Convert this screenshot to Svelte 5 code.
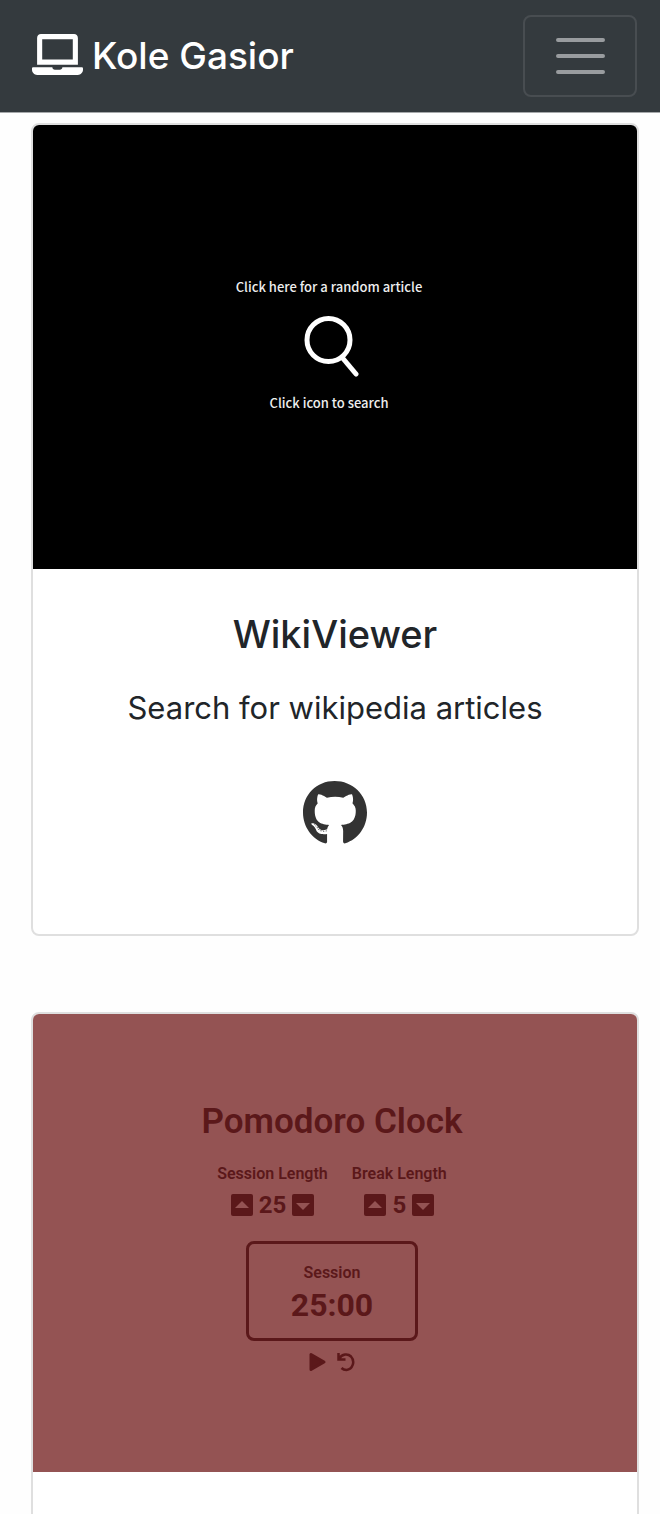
<script>
  const lengths = [
    { label: 'Session Length', value: 25 },
    { label: 'Break Length', value: 5 }
  ];
</script>

<div class="page">
  <nav class="navbar">
    <a class="brand" href="#home">
      <svg class="laptop" viewBox="0 0 640 512" aria-hidden="true"><path d="M624 416H381.54c-.74 19.81-14.71 32-32.74 32H288c-18.69 0-33.02-17.47-32.77-32H16c-8.8 0-16 7.2-16 16v16c0 35.2 28.8 64 64 64h512c35.2 0 64-28.8 64-64v-16c0-8.8-7.2-16-16-16zM576 48c0-26.4-21.6-48-48-48H112C85.6 0 64 21.6 64 48v336h512V48zm-64 272H128V64h384v256z" /></svg>
      <span>Kole Gasior</span>
    </a>
    <button class="toggler" type="button" aria-label="Toggle navigation">
      <svg viewBox="0 0 60 60" aria-hidden="true"><path d="M8 14h45M8 30h45M8 46h45" /></svg>
    </button>
  </nav>

  <main>
    <article class="card">
      <div class="shot wiki">
        <p>Click here for a random article</p>
        <svg class="glass" viewBox="0 0 56 62" aria-hidden="true">
          <circle cx="24.5" cy="25" r="21.5" />
          <path d="M39 43.500L52 59" />
        </svg>
        <p>Click icon to search</p>
      </div>
      <div class="body">
        <h4>WikiViewer</h4>
        <p>Search for wikipedia articles</p>
        <a class="github" href="#source" aria-label="GitHub">
          <svg viewBox="0 8 496 488" aria-hidden="true"><path d="M165.900 397.400c0 2-2.300 3.600-5.200 3.600-3.300.3-5.600-1.300-5.600-3.600 0-2 2.300-3.600 5.200-3.600 3-.3 5.600 1.300 5.600 3.600zm-31.100-4.500c-.7 2 1.300 4.300 4.300 4.900 2.600 1 5.600 0 6.200-2s-1.300-4.300-4.300-5.200c-2.600-.7-5.500.3-6.200 2.300zm44.200-1.700c-2.900.7-4.900 2.600-4.600 4.900.3 2 2.900 3.300 5.900 2.600 2.900-.7 4.900-2.600 4.600-4.600-.3-1.900-3-3.200-5.900-2.900zM244.800 8C106.100 8 0 113.300 0 252c0 110.900 69.800 205.800 169.500 239.200 12.800 2.300 17.300-5.600 17.300-12.100 0-6.200-.3-40.400-.3-61.400 0 0-70 15-84.700-29.800 0 0-11.400-29.100-27.800-36.600 0 0-22.900-15.700 1.600-15.400 0 0 24.900 2 38.600 25.800 21.900 38.600 58.600 27.500 72.900 20.900 2.300-16 8.800-27.100 16-33.700-55.900-6.200-112.300-14.300-112.300-110.500 0-27.500 7.600-41.300 23.600-58.900-2.600-6.500-11.100-33.300 2.600-67.900 20.900-6.500 69 27 69 27 20-5.600 41.500-8.500 62.800-8.500s42.800 2.900 62.800 8.500c0 0 48.100-33.600 69-27 13.700 34.700 5.200 61.400 2.600 67.900 16 17.700 25.800 31.500 25.800 58.900 0 96.500-58.900 104.200-114.800 110.500 9.200 7.900 17 22.900 17 46.400 0 33.700-.3 75.400-.3 83.600 0 6.500 4.600 14.400 17.300 12.100C428.200 457.800 496 362.900 496 252 496 113.300 383.500 8 244.800 8zM97.200 352.900c-1.300 1-1 3.300.7 5.200 1.600 1.600 3.900 2.300 5.200 1 1.300-1 1-3.300-.7-5.200-1.600-1.600-3.900-2.300-5.200-1zm-10.800-8.100c-.7 1.300.3 2.900 2.300 3.900 1.600 1 3.600.7 4.300-.7.7-1.300-.3-2.900-2.300-3.900-2-.6-3.600-.3-4.300.7zm32.400 35.600c-1.600 1.300-1 4.300 1.300 6.200 2.300 2.300 5.200 2.600 6.500 1 1.300-1.300.7-4.300-1.300-6.200-2.200-2.300-5.200-2.600-6.500-1zm-11.400-14.700c-1.600 1-1.600 3.600 0 5.900 1.600 2.300 4.300 3.300 5.600 2.300 1.600-1.300 1.600-3.900 0-6.200-1.400-2.300-4-3.300-5.600-2z" /></svg>
        </a>
      </div>
    </article>

    <article class="card">
      <div class="shot pomodoro">
        <h2>Pomodoro Clock</h2>
        <div class="lengths">
          {#each lengths as item}
            <div class="length">
              <span class="label">{item.label}</span>
              <div class="stepper">
                <button type="button" aria-label="Increase {item.label}">
                  <svg viewBox="0 0 22 22" aria-hidden="true"><rect width="22" height="22" rx="2" /><path d="M11 7l7 7H4z" /></svg>
                </button>
                <span>{item.value}</span>
                <button type="button" aria-label="Decrease {item.label}">
                  <svg viewBox="0 0 22 22" aria-hidden="true"><rect width="22" height="22" rx="2" /><path d="M11 16l7-7H4z" /></svg>
                </button>
              </div>
            </div>
          {/each}
        </div>
        <div class="clock">
          <span class="label">Session</span>
          <span class="time">25:00</span>
        </div>
        <div class="controls">
          <button type="button" aria-label="Start">
            <svg viewBox="0 0 18 20" aria-hidden="true"><path d="M2 2.500v15l13-7.500z" fill="currentColor" stroke="currentColor" stroke-width="3" stroke-linejoin="round" /></svg>
          </button>
          <button type="button" aria-label="Reset">
            <svg viewBox="0 0 18 20" aria-hidden="true"><path d="M1.500 1v6.500h7M2 7C5 1.500 11 1.500 14 4.500c4.500 5 1.500 13-4.500 13.500-2 0-3.500-.5-5-2" fill="none" stroke="currentColor" stroke-width="2.500" /></svg>
          </button>
        </div>
      </div>
      <div class="body"></div>
    </article>
  </main>
</div>

<style>
  :global(body) {
    margin: 0;
    background: #fefefe;
  }
  .page {
    height: 100vh;
    overflow: hidden;
    color: #212529;
    font-family: Inter, "Liberation Sans", sans-serif;
  }
  .page * {
    box-sizing: border-box;
  }
  h2, h4, p {
    margin: 0;
  }
  svg {
    display: block;
  }
  button {
    padding: 0;
    border: 0;
    background: none;
    color: inherit;
  }
  .navbar {
    display: flex;
    align-items: center;
    justify-content: space-between;
    padding: 15px 23px 15px 32px;
    background: #343a3e;
    border-bottom: 1px solid #a5a8aa;
  }
  .brand {
    display: flex;
    align-items: center;
    gap: 9px;
    color: #fff;
    font-size: 37px;
    font-weight: 500;
    line-height: 60px;
    text-decoration: none;
  }
  .laptop {
    width: 51px;
    height: 41px;
    margin-bottom: 3px;
    fill: #fff;
  }
  .toggler {
    display: grid;
    place-items: center;
    width: 114px;
    height: 82px;
    border: 2px solid #484d51;
    border-radius: 8px;
  }
  .toggler svg {
    width: 60px;
    height: 60px;
    fill: none;
    stroke: #999c9f;
    stroke-width: 4;
    stroke-linecap: round;
  }
  main {
    display: flex;
    flex-direction: column;
    gap: 76px;
    padding: 10px 21px 0 31px;
  }
  .card {
    overflow: hidden;
    background: #fff;
    border: 2px solid #dfdfdf;
    border-radius: 8px;
  }
  .shot {
    display: flex;
    flex-direction: column;
    align-items: center;
  }
  .wiki {
    justify-content: center;
    aspect-ratio: 604 / 444;
    padding: 0 12px 4px 0;
    background: #000;
    color: #eee;
    font: 500 13px/20px "Noto Sans CJK SC", sans-serif;
  }
  .glass {
    width: 56px;
    height: 62px;
    margin: 18px 0 16px 6px;
    fill: none;
    stroke: #fff;
    stroke-width: 5;
    stroke-linecap: round;
  }
  .body {
    display: flex;
    flex-direction: column;
    align-items: center;
    min-height: 365px;
    padding: 41px 40px 40px;
    text-align: center;
  }
  .body h4 {
    font-size: 38px;
    font-weight: 500;
    line-height: 48px;
  }
  .body p {
    margin-top: 26px;
    font-size: 31px;
    line-height: 48px;
  }
  .github {
    margin-top: 49px;
  }
  .github svg {
    width: 64px;
    height: 63px;
    fill: #333;
  }
  .pomodoro {
    aspect-ratio: 604 / 458;
    padding: 84px 6px 0 0;
    background: #945353;
    color: #5b181a;
    font-family: Roboto, sans-serif;
    font-weight: 700;
  }
  .pomodoro h2 {
    font-size: 35px;
    font-weight: 600;
    line-height: 48px;
  }
  .lengths {
    display: flex;
    gap: 24px;
    margin-top: 18px;
  }
  .length {
    display: flex;
    flex-direction: column;
    align-items: center;
  }
  .label {
    font-size: 16px;
    font-weight: 600;
    line-height: 20px;
  }
  .stepper {
    display: flex;
    align-items: center;
    gap: 6px;
    margin-top: 6px;
    font-size: 24px;
    line-height: 30px;
  }
  .stepper svg {
    width: 22px;
    height: 22px;
    fill: currentColor;
  }
  .stepper path {
    fill: #945353;
  }
  .clock {
    display: flex;
    flex-direction: column;
    align-items: center;
    justify-content: center;
    width: 172px;
    height: 100px;
    margin-top: 21px;
    padding-top: 8px;
    border: 3px solid;
    border-radius: 8px;
  }
  .time {
    font-size: 32px;
    line-height: 44px;
  }
  .controls {
    display: flex;
    gap: 10px;
    margin-top: 11px;
  }
  .controls svg {
    width: 18px;
    height: 20px;
  }
</style>
